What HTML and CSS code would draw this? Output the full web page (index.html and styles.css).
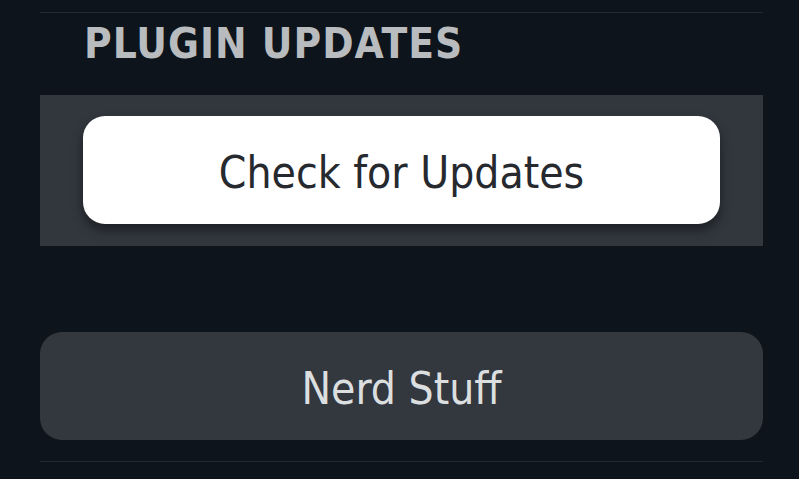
FILE: index.html
```html
<!DOCTYPE html>
<html>
<head>
<meta charset="utf-8">
<link rel="stylesheet" href="styles.css">
</head>
<body>
<div class="page">
  <div class="rule top"></div>
  <div class="section-title">PLUGIN UPDATES</div>
  <div class="panel">
    <button class="btn-primary">Check for Updates</button>
  </div>
  <div class="spacer"></div>
  <button class="btn-secondary">Nerd Stuff</button>
  <div class="rule bottom"></div>
</div>
</body>
</html>
```

FILE: styles.css
```css
html, body {
  margin: 0;
  padding: 0;
  background: #0e141b;
  width: 799px;
  height: 479px;
  overflow: hidden;
  font-family: "DejaVu Sans Condensed", "DejaVu Sans", "Noto Sans", sans-serif;
}
.page {
  display: flex;
  flex-direction: column;
  padding: 12px 36px 0 40px;
}
.rule {
  height: 1px;
  background: #242a31;
}
.section-title {
  height: 82px;
  box-sizing: border-box;
  padding: 7px 0 0 44px;
  font-size: 42px;
  font-weight: bold;
  color: #b8bcbf;
  line-height: 48px;
  letter-spacing: 1px;
}
.panel {
  background: #32373e;
  padding: 21px 43px 22px 43px;
  height: 151px;
  box-sizing: border-box;
}
button {
  font-family: inherit;
  border: none;
  display: flex;
  align-items: center;
  justify-content: center;
  width: 100%;
  height: 108px;
  border-radius: 22px;
  padding: 4px 0 0 0;
  font-size: 44px;
}
.btn-primary {
  background: #ffffff;
  color: #26292e;
  box-shadow: 0 6px 12px rgba(0, 0, 0, 0.45);
}
.spacer {
  height: 86px;
}
.btn-secondary {
  background: #33373e;
  color: #dcdfe0;
}
.rule.bottom {
  margin-top: 21px;
}
```
